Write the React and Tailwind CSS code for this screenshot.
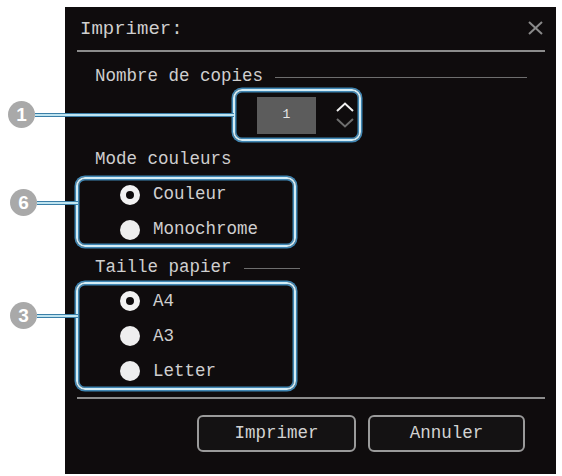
import React from 'react';

const mono = { fontFamily: '"Liberation Mono", "Courier New", monospace' };

const frame =
  'rounded-[9px] border-2 border-[#d3ecf5] shadow-[0_0_0_1.5px_#3f86b3,inset_0_0_0_1.5px_#3f86b3]';

const Radio = ({ checked, label }) => (
  <div className="flex h-[30px] items-center pl-[42px]">
    {checked ? (
      <span className="h-[20px] w-[20px] shrink-0 rounded-full border-[6px] border-[#f2f2f2] bg-[#0f0c0d]" />
    ) : (
      <span className="h-[20px] w-[20px] shrink-0 rounded-full bg-[#eeeeee]" />
    )}
    <span className="ml-[13px]">{label}</span>
  </div>
);

const Line = () => (
  <div className="h-[4px] border-y border-[#3b7fa8] bg-[#bfe4f0]" />
);

const Badge = ({ n }) => (
  <div
    className="flex h-[27px] w-[27px] shrink-0 items-center justify-center rounded-full bg-[#a9a9a9] text-[19px] font-bold leading-none text-white"
    style={{ fontFamily: '"Liberation Sans", Arial, sans-serif' }}
  >
    {n}
  </div>
);

const App = () => {
  return (
    <div className="relative h-[476px] w-[562px] overflow-hidden bg-white" style={mono}>
      <div className="ml-[65px] mt-[7px] flex h-[467px] w-[491px] flex-col bg-[#0f0c0d] text-[17.5px] text-[#cfcfcf]">
        {/* header */}
        <div className="flex h-[43px] items-center justify-between pl-[15px] pr-[13px] pt-[2px]">
          <span className="text-[19px] leading-none">Imprimer:</span>
          <svg width="15" height="14" viewBox="0 0 15 14" className="mt-[-3px]">
            <line x1="1" y1="1" x2="14" y2="13" stroke="#8a8a8a" strokeWidth="2" />
            <line x1="14" y1="1" x2="1" y2="13" stroke="#8a8a8a" strokeWidth="2" />
          </svg>
        </div>
        <div className="ml-[12px] mr-[11px] h-[2px] bg-[#8c8c8c]" />

        {/* copies */}
        <div className="mt-[15px] flex h-[20px] items-center pl-[30px] pr-[29px] leading-none">
          <span>Nombre de copies</span>
          <div className="ml-[12px] h-px flex-1 bg-[#6e6e6e]" />
        </div>
        <div className={`ml-[168px] mt-[2px] flex h-[52px] w-[128px] items-center ${frame}`}>
          <div className="ml-[22px] flex h-[37px] w-[59px] items-center justify-center bg-[#5c5c5c] text-[13px] text-[#e6e6e6]">
            1
          </div>
          <div className="ml-[20px] flex flex-col items-center gap-[6px]">
            <svg width="18" height="10" viewBox="0 0 18 10">
              <polyline points="1,9 9,1.5 17,9" fill="none" stroke="#f0f0f0" strokeWidth="2" />
            </svg>
            <svg width="18" height="10" viewBox="0 0 18 10">
              <polyline points="1,1 9,8.5 17,1" fill="none" stroke="#6e6e6e" strokeWidth="2" />
            </svg>
          </div>
        </div>

        {/* colour mode */}
        <div className="mt-[9px] flex h-[20px] items-center pl-[30px] leading-none">
          <span>Mode couleurs</span>
        </div>
        <div className={`ml-[11px] mt-[7px] flex h-[70px] w-[220px] flex-col justify-center gap-[5px] ${frame}`}>
          <Radio checked label="Couleur" />
          <Radio label="Monochrome" />
        </div>

        {/* paper size */}
        <div className="mt-[11px] flex h-[20px] items-center pl-[30px] leading-none">
          <span>Taille papier</span>
          <div className="ml-[12px] h-px w-[56px] bg-[#6e6e6e]" />
        </div>
        <div className={`ml-[11px] mt-[4px] flex h-[108px] w-[220px] flex-col justify-center gap-[5px] ${frame}`}>
          <Radio checked label="A4" />
          <Radio label="A3" />
          <Radio label="Letter" />
        </div>

        <div className="ml-[12px] mr-[11px] mt-[7px] h-[2px] bg-[#8c8c8c]" />

        {/* buttons */}
        <div className="mt-[16px] flex justify-end gap-[12px] pr-[31px]">
          <button className="h-[37px] w-[159px] rounded-[6px] border-2 border-[#9a9a9a] bg-[#141213] text-[17.5px] text-[#d2d2d2]">
            Imprimer
          </button>
          <button className="h-[37px] w-[157px] rounded-[6px] border-2 border-[#9a9a9a] bg-[#141213] text-[17.5px] text-[#d2d2d2]">
            Annuler
          </button>
        </div>
      </div>

      {/* callouts */}
      <div className="absolute left-[8px] top-[101px] flex w-[226px] items-center">
        <Badge n="1" />
        <div className="flex-1">
          <Line />
        </div>
      </div>
      <div className="absolute left-[10px] top-[189px] flex w-[68px] items-center">
        <Badge n="6" />
        <div className="flex-1">
          <Line />
        </div>
      </div>
      <div className="absolute left-[10px] top-[302px] flex w-[68px] items-center">
        <Badge n="3" />
        <div className="flex-1">
          <Line />
        </div>
      </div>
    </div>
  );
};

export default App;
